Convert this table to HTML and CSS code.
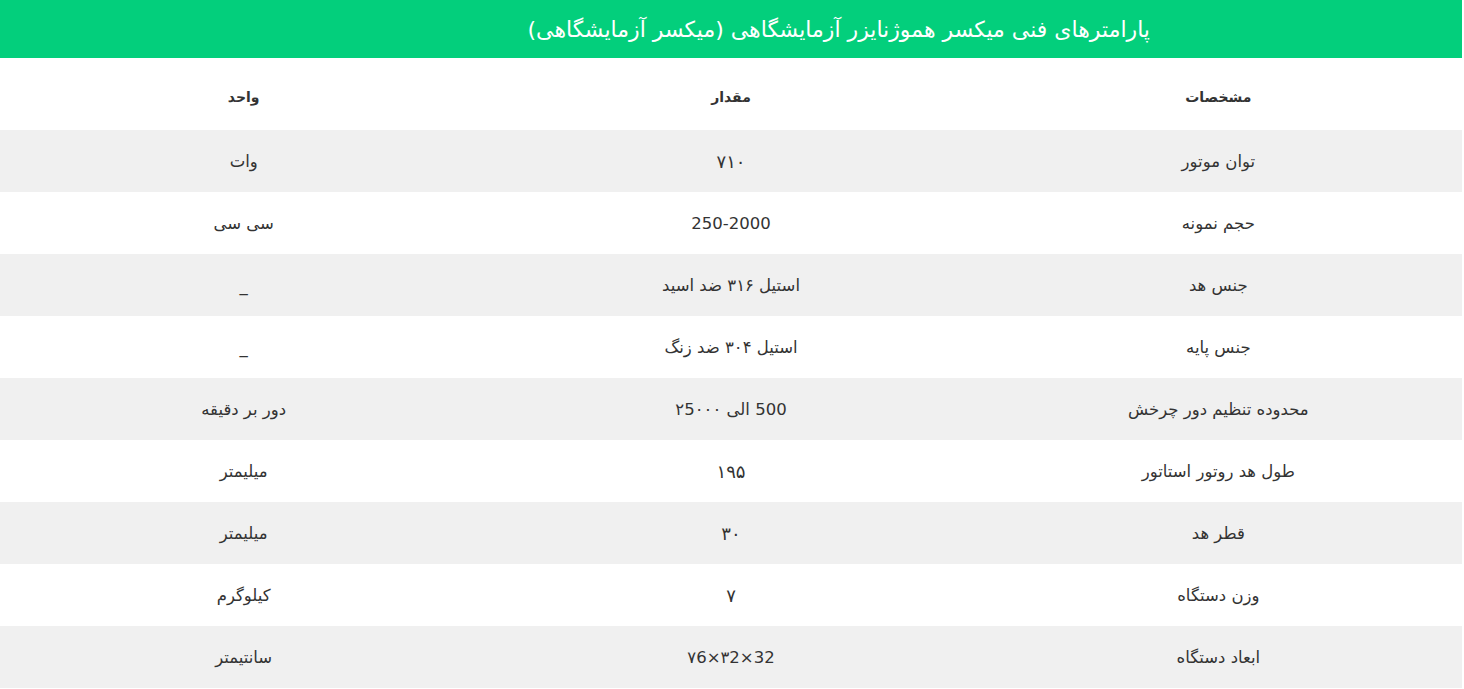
FILE: index.html
```html
<!DOCTYPE html>
<html lang="fa">
<head>
<meta charset="utf-8">
<title>پارامترهای فنی</title>
<link rel="stylesheet" href="styles.css">
</head>
<body>
<div class="wrap" dir="rtl">
  <div class="title">پارامترهای فنی میکسر هموژنایزر آزمایشگاهی (میکسر آزمایشگاهی)</div>
  <table class="spec">
    <thead>
      <tr><th>مشخصات</th><th>مقدار</th><th>واحد</th></tr>
    </thead>
    <tbody>
      <tr><td>توان موتور</td><td class="num">۷۱۰</td><td>وات</td></tr>
      <tr><td>حجم نمونه</td><td><span dir="ltr">250-2000</span></td><td>سی سی</td></tr>
      <tr><td>جنس هد</td><td>استیل ۳۱۶ ضد اسید</td><td>_</td></tr>
      <tr><td>جنس پایه</td><td>استیل ۳۰۴ ضد زنگ</td><td>_</td></tr>
      <tr><td>محدوده تنظیم دور چرخش</td><td>500 الی <span dir="ltr">۲5۰۰۰</span></td><td>دور بر دقیقه</td></tr>
      <tr><td>طول هد روتور استاتور</td><td class="num">۱۹۵</td><td>میلیمتر</td></tr>
      <tr><td>قطر هد</td><td class="num">۳۰</td><td>میلیمتر</td></tr>
      <tr><td>وزن دستگاه</td><td class="num">۷</td><td>کیلوگرم</td></tr>
      <tr><td>ابعاد دستگاه</td><td><span dir="ltr">۷6×۳2×32</span></td><td>سانتیمتر</td></tr>
    </tbody>
  </table>
</div>
</body>
</html>
```
FILE: styles.css
```css
html, body {
  margin: 0;
  padding: 0;
  background: #ffffff;
}
body {
  font-family: "DejaVu Sans", "Liberation Sans", sans-serif;
  color: #333333;
}
.wrap {
  width: 1462px;
  margin-left: 0;
  margin-right: auto;
}
.title {
  background: #03cf7c;
  color: #ffffff;
  height: 58px;
  display: flex;
  align-items: center;
  justify-content: flex-start;
  padding-right: 312px;
  font-size: 22px;
  box-sizing: border-box;
}
.spec {
  width: 100%;
  border-collapse: collapse;
  table-layout: fixed;
}
.spec th, .spec td {
  text-align: center;
  vertical-align: middle;
  padding: 0;
}
.spec th {
  height: 72px;
  padding-top: 6px;
  box-sizing: border-box;
  font-size: 14px;
  font-weight: bold;
  color: #333333;
}
.spec td {
  height: 62px;
  font-size: 16.5px;
  color: #333333;
}
.spec td.num {
  font-size: 18px;
}
.spec tbody tr:nth-child(odd) {
  background: #f0f0f0;
}
```
